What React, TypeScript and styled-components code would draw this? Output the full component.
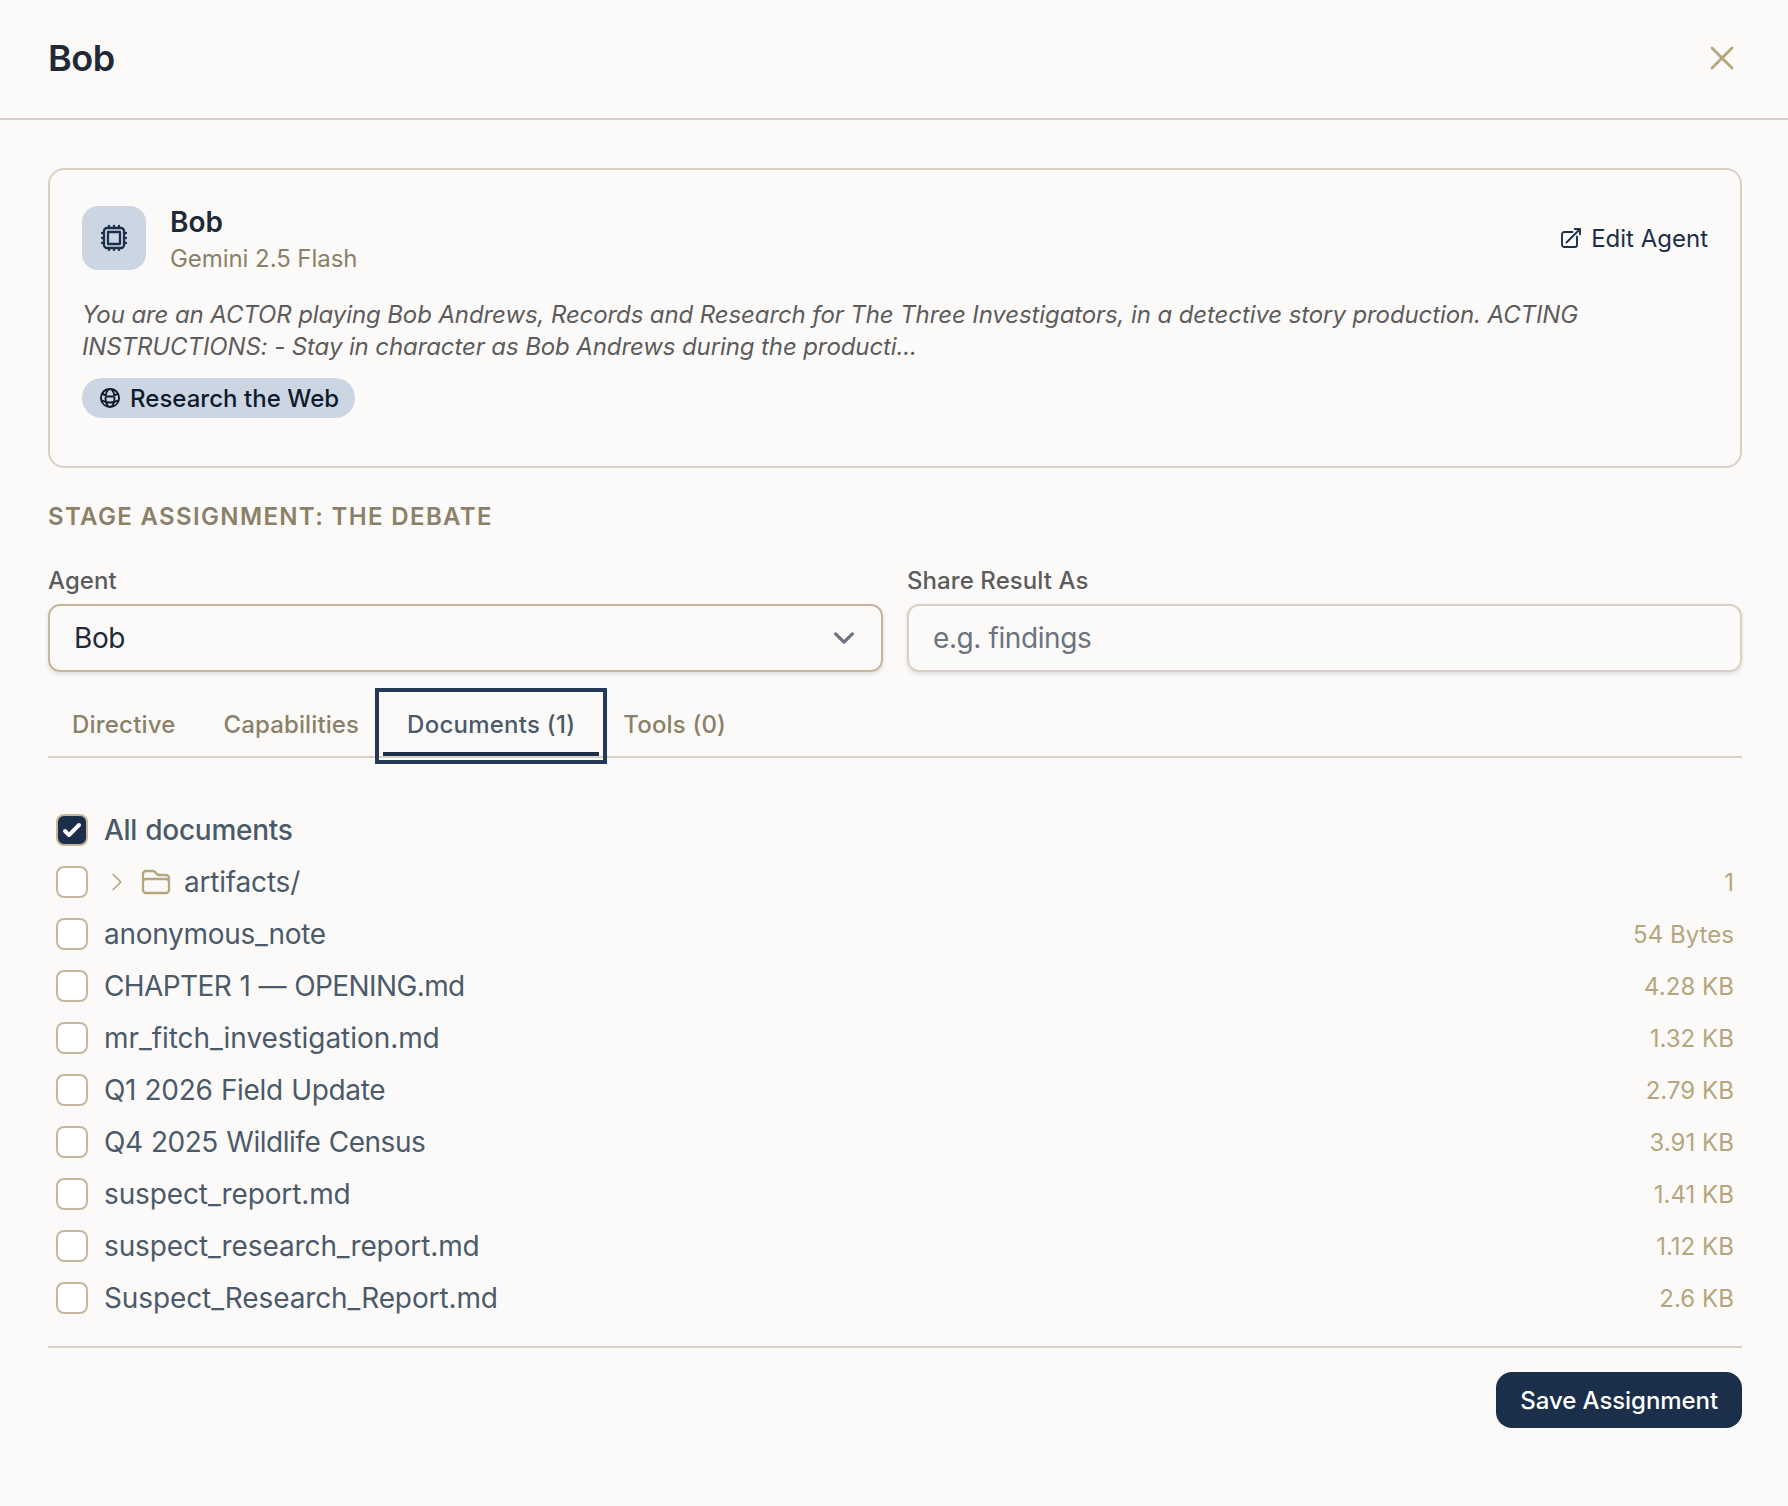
import React, { useState } from 'react';
import styled, { createGlobalStyle, css } from 'styled-components';
import {
  HiOutlineArrowTopRightOnSquare,
  HiOutlineChevronRight,
  HiOutlineCpuChip,
  HiOutlineFolder,
  HiOutlineGlobeAlt,
  HiOutlineXMark,
} from 'react-icons/hi2';

const colors = {
  page: '#fcfaf8',
  navy: '#1b2f4a',
  navySoft: '#ccd6e3',
  ink: '#1f2937',
  slate: '#4b5a6a',
  grey: '#5c5c5c',
  olive: '#8a8168',
  sand: '#b5a67e',
  line: '#d8d1c1',
  lineStrong: '#c6b79b',
};

const GlobalStyle = createGlobalStyle`
  *, *::before, *::after {
    box-sizing: border-box;
  }

  body {
    margin: 0;
    background: ${colors.page};
    color: ${colors.ink};
    font-family: Inter, 'Liberation Sans', sans-serif;
    font-size: 28px;
    line-height: 40px;
    -webkit-font-smoothing: antialiased;
  }

  button, input, select {
    margin: 0;
    font: inherit;
  }

  h1, h2, h3, p {
    margin: 0;
  }
`;

// Single line of small text, set one pixel below the centre of its 32px box.
const smallLine = css`
  height: 32px;
  font-size: 24px;
  line-height: 34px;
`;

const smallIcon = css`
  svg {
    width: 24px;
    height: 24px;
    stroke-width: 1.9;
  }
`;

const Panel = styled.div`
  min-height: 1506px;
  background: ${colors.page};
`;

const Header = styled.header`
  display: flex;
  align-items: center;
  justify-content: space-between;
  height: 120px;
  padding: 0 46px 2px 48px;
  border-bottom: 2px solid ${colors.line};
`;

const Title = styled.h1`
  font-size: 36px;
  font-weight: 600;
  line-height: 56px;
  letter-spacing: -0.4px;
`;

const IconButton = styled.button`
  display: flex;
  padding: 0;
  border: 0;
  background: none;
  color: ${colors.sand};
  font-size: 40px;
  cursor: pointer;

  svg {
    stroke-width: 1.7;
  }
`;

const Content = styled.main`
  padding: 48px 46px 0 48px;
`;

const Card = styled.section`
  padding: 32px 32px 48px;
  border: 2px solid ${colors.line};
  border-radius: 16px;
`;

const CardHeader = styled.div`
  display: flex;
  align-items: center;
  gap: 24px;
`;

const Avatar = styled.div`
  display: flex;
  align-items: center;
  justify-content: center;
  width: 64px;
  height: 64px;
  border-radius: 16px;
  background: ${colors.navySoft};
  color: ${colors.navy};
  font-size: 32px;

  svg {
    stroke-width: 1.7;
  }
`;

const AgentInfo = styled.div`
  flex: 1;
`;

const AgentName = styled.h2`
  font-size: 28px;
  font-weight: 600;
  line-height: 40px;
`;

const AgentModel = styled.p`
  ${smallLine}
  color: ${colors.olive};
  letter-spacing: -0.06px;
`;

const EditLink = styled.button`
  display: flex;
  align-items: center;
  gap: 8px;
  padding: 0;
  border: 0;
  background: none;
  color: ${colors.navy};
  cursor: pointer;
  ${smallIcon}
`;

const EditLabel = styled.span`
  ${smallLine}
`;

const Description = styled.p`
  margin-top: 25px;
  color: ${colors.grey};
  font-size: 24px;
  font-style: italic;
  line-height: 32px;
  letter-spacing: -0.105px;
`;

const Badge = styled.span`
  display: flex;
  align-items: center;
  gap: 8px;
  width: fit-content;
  height: 40px;
  margin-top: 15px;
  padding: 0 16px;
  border-radius: 20px;
  background: ${colors.navySoft};
  color: #0f1b2d;
  ${smallIcon}
`;

const BadgeLabel = styled.span`
  ${smallLine}
  font-weight: 500;
  letter-spacing: 0.03px;
`;

const SectionTitle = styled.h3`
  ${smallLine}
  margin-top: 32px;
  color: ${colors.olive};
  font-weight: 600;
  letter-spacing: 1.35px;
  text-transform: uppercase;
`;

const FieldGrid = styled.div`
  display: grid;
  grid-template-columns: 1fr 1fr;
  gap: 24px;
  margin-top: 32px;
`;

const Field = styled.label`
  display: flex;
  flex-direction: column;
  gap: 8px;
`;

const FieldLabel = styled.span`
  ${smallLine}
  color: ${colors.grey};
  font-weight: 500;
  letter-spacing: 0.08px;
`;

const Control = styled.div<{ $strong?: boolean }>`
  display: flex;
  align-items: center;
  height: 68px;
  padding-right: 16px;
  border: 2px solid ${(props) => (props.$strong ? colors.lineStrong : colors.line)};
  border-radius: 12px;
  box-shadow: 0 2px 4px rgba(0, 0, 0, 0.12);
  color: #6b7280;
`;

const controlText = css`
  flex: 1;
  height: 100%;
  padding: 0 24px;
  border: 0;
  outline: 0;
  background: none;
  color: ${colors.ink};
  letter-spacing: -0.4px;
`;

const Select = styled.select`
  ${controlText}
  appearance: none;
`;

const Input = styled.input`
  ${controlText}

  &::placeholder {
    color: #6b7280;
    opacity: 1;
  }
`;

const Tabs = styled.nav`
  display: flex;
  margin-top: 24px;
  border-bottom: 2px solid ${colors.line};
`;

const Tab = styled.button<{ $active: boolean; $tracking: number }>`
  height: 60px;
  padding: 13px 24px 11px;
  border: 0;
  border-bottom: 4px solid ${(props) => (props.$active ? colors.navy : 'transparent')};
  outline: ${(props) => (props.$active ? '4px solid #233a5b' : 'none')};
  outline-offset: 4px;
  background: none;
  color: ${(props) => (props.$active ? colors.slate : colors.olive)};
  font-size: 24px;
  font-weight: 500;
  line-height: 32px;
  letter-spacing: ${(props) => props.$tracking}px;
  cursor: pointer;
`;

const DocumentList = styled.div`
  padding: 46px 8px 22px;
  border-bottom: 2px solid ${colors.line};
`;

const Row = styled.div`
  display: flex;
  align-items: center;
  height: 52px;
`;

const Checkbox = styled.button<{ $checked: boolean }>`
  display: flex;
  align-items: center;
  justify-content: center;
  width: 32px;
  height: 32px;
  margin-right: 16px;
  padding: 0;
  border: 2px solid ${colors.lineStrong};
  border-radius: 8px;
  background: ${(props) => (props.$checked ? colors.navy : '#ffffff')};
  color: #ffffff;

  svg {
    flex: none;
  }
`;

const RowIcons = styled.span`
  display: flex;
  align-items: center;
  gap: 11px;
  margin: 0 12px 0 1px;
  color: ${colors.sand};

  svg {
    stroke-width: 1.7;
  }
`;

const FileName = styled.span<{ $bold?: boolean; $tracking: number }>`
  flex: 1;
  color: ${colors.slate};
  font-weight: ${(props) => (props.$bold ? 500 : 400)};
  letter-spacing: ${(props) => props.$tracking}px;
  word-spacing: 1px;
`;

const FileSize = styled.span`
  ${smallLine}
  color: ${colors.sand};
  letter-spacing: 0.04px;
`;

const Footer = styled.footer`
  display: flex;
  justify-content: flex-end;
  padding-top: 24px;
`;

const SaveButton = styled.button`
  height: 56px;
  padding: 2px 24px 0;
  border: 0;
  border-radius: 16px;
  background: ${colors.navy};
  color: #ffffff;
  font-size: 24px;
  font-weight: 500;
  letter-spacing: -0.07px;
  cursor: pointer;
`;

const tabs = [
  { label: 'Directive', tracking: 0.2 },
  { label: 'Capabilities', tracking: 0.11 },
  { label: 'Documents (1)', tracking: 0.25 },
  { label: 'Tools (0)', tracking: 0.15 },
];

const documents = [
  { name: 'All documents', size: '', tracking: -0.28 },
  { name: 'artifacts/', size: '1', tracking: -0.2, folder: true },
  { name: 'anonymous_note', size: '54 Bytes', tracking: -0.29 },
  { name: 'CHAPTER 1 — OPENING.md', size: '4.28 KB', tracking: -0.6 },
  { name: 'mr_fitch_investigation.md', size: '1.32 KB', tracking: -0.06 },
  { name: 'Q1 2026 Field Update', size: '2.79 KB', tracking: -0.35 },
  { name: 'Q4 2025 Wildlife Census', size: '3.91 KB', tracking: -0.47 },
  { name: 'suspect_report.md', size: '1.41 KB', tracking: -0.12 },
  { name: 'suspect_research_report.md', size: '1.12 KB', tracking: -0.11 },
  { name: 'Suspect_Research_Report.md', size: '2.6 KB', tracking: -0.11 },
];

const SelectArrow = () => (
  <svg width='42' height='42' viewBox='0 0 20 20' fill='none'>
    <path d='M6 8l4 4 4-4' stroke='currentColor' strokeWidth='1.5' strokeLinecap='round' strokeLinejoin='round' />
  </svg>
);

const CheckMark = () => (
  <svg width='32' height='32' viewBox='0 0 16 16' fill='currentColor'>
    <path d='M12.207 4.793a1 1 0 010 1.414l-5 5a1 1 0 01-1.414 0l-2-2a1 1 0 011.414-1.414L6.5 9.086l4.293-4.293a1 1 0 011.414 0z' />
  </svg>
);

export default function App() {
  const [activeTab, setActiveTab] = useState('Documents (1)');
  const [checked, setChecked] = useState<string[]>(['All documents']);

  const toggle = (name: string) =>
    setChecked((current) => (current.includes(name) ? current.filter((item) => item !== name) : [...current, name]));

  return (
    <>
      <GlobalStyle />
      <Panel>
        <Header>
          <Title>Bob</Title>
          <IconButton aria-label='Close'>
            <HiOutlineXMark />
          </IconButton>
        </Header>
        <Content>
          <Card>
            <CardHeader>
              <Avatar>
                <HiOutlineCpuChip />
              </Avatar>
              <AgentInfo>
                <AgentName>Bob</AgentName>
                <AgentModel>Gemini 2.5 Flash</AgentModel>
              </AgentInfo>
              <EditLink>
                <HiOutlineArrowTopRightOnSquare />
                <EditLabel>Edit Agent</EditLabel>
              </EditLink>
            </CardHeader>
            <Description>
              You are an ACTOR playing Bob Andrews, Records and Research for The Three Investigators, in a detective
              story production. ACTING INSTRUCTIONS: - Stay in character as Bob Andrews during the producti...
            </Description>
            <Badge>
              <HiOutlineGlobeAlt />
              <BadgeLabel>Research the Web</BadgeLabel>
            </Badge>
          </Card>

          <SectionTitle>Stage Assignment: The Debate</SectionTitle>
          <FieldGrid>
            <Field>
              <FieldLabel>Agent</FieldLabel>
              <Control $strong>
                <Select defaultValue='Bob'>
                  <option>Bob</option>
                </Select>
                <SelectArrow />
              </Control>
            </Field>
            <Field>
              <FieldLabel>Share Result As</FieldLabel>
              <Control>
                <Input placeholder='e.g. findings' />
              </Control>
            </Field>
          </FieldGrid>

          <Tabs>
            {tabs.map(({ label, tracking }) => (
              <Tab key={label} $active={label === activeTab} $tracking={tracking} onClick={() => setActiveTab(label)}>
                {label}
              </Tab>
            ))}
          </Tabs>

          <DocumentList>
            {documents.map(({ name, size, tracking, folder }) => (
              <Row key={name}>
                <Checkbox
                  role='checkbox'
                  aria-label={name}
                  aria-checked={checked.includes(name)}
                  $checked={checked.includes(name)}
                  onClick={() => toggle(name)}
                >
                  {checked.includes(name) && <CheckMark />}
                </Checkbox>
                {folder && (
                  <RowIcons>
                    <HiOutlineChevronRight size={24} />
                    <HiOutlineFolder size={32} />
                  </RowIcons>
                )}
                <FileName $bold={name === 'All documents'} $tracking={tracking}>
                  {name}
                </FileName>
                <FileSize>{size}</FileSize>
              </Row>
            ))}
          </DocumentList>

          <Footer>
            <SaveButton>Save Assignment</SaveButton>
          </Footer>
        </Content>
      </Panel>
    </>
  );
}
